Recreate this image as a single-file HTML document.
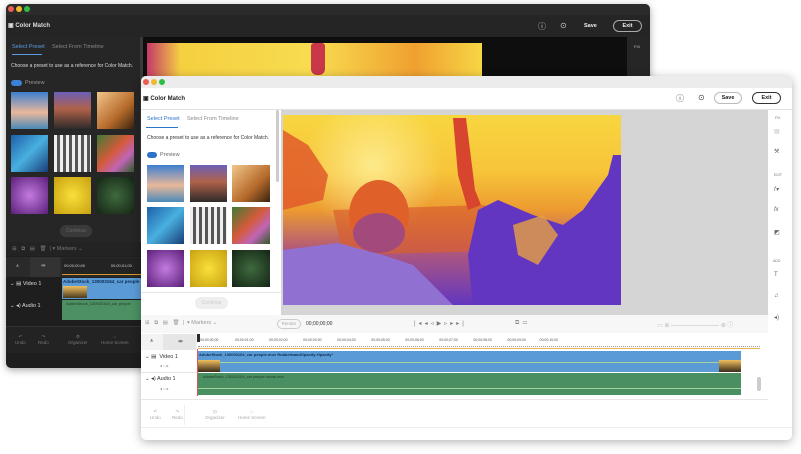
<!DOCTYPE html>
<html><head><meta charset="utf-8">
<style>
*{margin:0;padding:0;box-sizing:border-box}
body{width:801px;height:454px;background:#fff;position:relative;overflow:hidden;font-family:"Liberation Sans",sans-serif}
.a{position:absolute}
.t{position:absolute;white-space:nowrap;font-size:5.5px}
.dot{position:absolute;width:6px;height:6px;border-radius:50%}
</style></head><body>

<!-- DARK WINDOW -->
<div class="a" style="left:6px;top:4px;width:644px;height:364px;background:#1e1e1e;border-radius:5px;box-shadow:0 2px 8px rgba(0,0,0,.35)"></div>
<div class="a" style="left:6px;top:4px;width:644px;height:11px;background:#2b2b2b;border-radius:5px 5px 0 0"></div>
<div class="dot" style="left:8px;top:6px;background:#ee5b52"></div>
<div class="dot" style="left:16px;top:6px;background:#f0b92d"></div>
<div class="dot" style="left:24px;top:6px;background:#2bbd45"></div>
<div class="a" style="left:6px;top:15px;width:644px;height:22px;background:#252525"></div>
<div class="t" style="left:8px;top:22px;color:#ddd;font-weight:bold;font-size:6px">▣ Color Match</div>
<div class="t" style="left:538px;top:21px;color:#ccc;font-size:8px">ⓘ</div>
<div class="t" style="left:560px;top:21px;color:#ccc;font-size:8px">⊙</div>
<div class="t" style="left:584px;top:23px;color:#eee;font-weight:bold">Save</div>
<div class="a" style="left:613px;top:20px;width:29px;height:12px;border:1px solid #aaa;border-radius:6px;color:#eee;font-size:5.5px;font-weight:bold;text-align:center;line-height:10px">Exit</div>
<div class="a" style="left:6px;top:37px;width:137px;height:205px;background:#262626"></div>
<div class="a" style="left:140px;top:37px;width:3px;height:205px;background:#3a3a3a"></div>
<div class="t" style="left:12px;top:44px;color:#5c9ce6">Select Preset</div>
<div class="a" style="left:12px;top:54px;width:30px;height:1px;background:#5c9ce6"></div>
<div class="t" style="left:52px;top:44px;color:#888">Select From Timeline</div>
<div class="t" style="left:11px;top:63px;color:#ddd;font-size:5px">Choose a preset to use as a reference for Color Match.</div>
<div class="a" style="left:11px;top:80px;width:11px;height:6px;background:#3b82d6;border-radius:3px"></div>
<div class="t" style="left:25px;top:80px;color:#999">Preview</div>
<div class="a" style="left:11px;top:92px;width:37px;height:37px;background:linear-gradient(#3d7fd0,#e9b89a 55%,#4a8ab8)"></div>
<div class="a" style="left:54px;top:92px;width:37px;height:37px;background:linear-gradient(#6b5fb8,#b0624a 45%,#2e2a2a)"></div>
<div class="a" style="left:97px;top:92px;width:37px;height:37px;background:linear-gradient(135deg,#f2c68a,#b56a2a 60%,#3a2210)"></div>
<div class="a" style="left:11px;top:135px;width:37px;height:37px;background:linear-gradient(135deg,#1e5fa8,#49b0e0 50%,#173e78)"></div>
<div class="a" style="left:54px;top:135px;width:37px;height:37px;background:repeating-linear-gradient(90deg,#eee 0 3px,#555 3px 6px)"></div>
<div class="a" style="left:97px;top:135px;width:37px;height:37px;background:linear-gradient(135deg,#3f7a34,#d45a3a 45%,#c065b5 70%,#2f5c28)"></div>
<div class="a" style="left:11px;top:177px;width:37px;height:37px;background:radial-gradient(#c37ae0,#5a1e78)"></div>
<div class="a" style="left:54px;top:177px;width:37px;height:37px;background:radial-gradient(#f8e03a,#c9a010)"></div>
<div class="a" style="left:97px;top:177px;width:37px;height:37px;background:radial-gradient(#3e6a3e,#142414)"></div>
<div class="a" style="left:60px;top:225px;width:32px;height:12px;background:#3a3a3a;border-radius:6px;color:#666;font-size:5px;text-align:center;line-height:12px">Continue</div>
<div class="a" style="left:143px;top:37px;width:484px;height:205px;background:#0e0e0e"></div>
<div class="a" style="left:147px;top:43px;width:335px;height:40px;background:linear-gradient(90deg,#c53a6a,#f5d040 10%,#f8dc50 50%,#f0a030 80%,#f7d645)"></div>
<div class="a" style="left:311px;top:43px;width:14px;height:32px;background:#c83848;border-radius:3px 3px 6px 6px"></div>
<div class="a" style="left:627px;top:37px;width:23px;height:205px;background:#262626"></div>
<div class="t" style="left:634px;top:44px;color:#bbb;font-size:4px">FIX</div>
<div class="a" style="left:6px;top:242px;width:137px;height:14px;background:#232323"></div>
<div class="t" style="left:12px;top:246px;color:#777">⊞ &nbsp; ⧉ &nbsp; ▤ &nbsp; 🗑 &nbsp;| ▾ Markers ⌄</div>
<div class="a" style="left:6px;top:257px;width:137px;height:20px;background:#2a2a2a"></div>
<div class="a" style="left:30px;top:257px;width:30px;height:20px;background:#333"></div>
<div class="t" style="left:16px;top:263px;color:#aaa">⩚</div>
<div class="t" style="left:41px;top:263px;color:#aaa">⇹</div>
<div class="a" style="left:62px;top:258px;width:81px;height:16px;background:#232323"></div>
<div class="t" style="left:64px;top:263px;color:#ccc;font-size:4px">00;00;00;00 &nbsp; &nbsp; &nbsp; &nbsp; &nbsp; &nbsp; &nbsp; &nbsp; &nbsp; &nbsp; &nbsp; 00;00;01;00</div>
<div class="a" style="left:62px;top:274px;width:81px;height:1px;background:#d9962a"></div>
<div class="a" style="left:62px;top:278px;width:81px;height:21px;background:#5b9bd5"></div>
<div class="t" style="left:63px;top:279px;color:#0d2c55;font-size:4.5px;font-weight:bold">AdobeStock_130003164_car people</div>
<div class="a" style="left:63px;top:286px;width:24px;height:12px;background:linear-gradient(#f0c060,#4a3a20)"></div>
<div class="a" style="left:62px;top:300px;width:81px;height:20px;background:#4c9063"></div>
<div class="t" style="left:66px;top:301px;color:#1d3a26;font-size:4px">AdobeStock_130003164_car people</div>
<div class="t" style="left:10px;top:281px;color:#ddd;font-size:5.5px">⌄ ▤ Video 1</div>
<div class="t" style="left:10px;top:303px;color:#ddd;font-size:5.5px">⌄ ◂) Audio 1</div>
<div class="a" style="left:6px;top:326px;width:137px;height:27px;background:#232323;border-top:1px solid #333"></div>
<div class="t" style="left:15px;top:334px;color:#777;font-size:4.5px;text-align:center;line-height:6px">↶<br>Undo</div>
<div class="t" style="left:38px;top:334px;color:#777;font-size:4.5px;text-align:center;line-height:6px">↷<br>Redo</div>
<div class="t" style="left:68px;top:334px;color:#777;font-size:4.5px;text-align:center;line-height:6px">⚙<br>Organizer</div>
<div class="t" style="left:101px;top:334px;color:#777;font-size:4.5px;text-align:center;line-height:6px">⌂<br>Home Screen</div>

<!-- LIGHT WINDOW -->
<div class="a" style="left:141px;top:76px;width:651px;height:364px;background:#fff;border-radius:5px;box-shadow:0 2px 10px rgba(0,0,0,.3)"></div>
<div class="a" style="left:141px;top:76px;width:651px;height:12px;background:#ececec;border-radius:5px 5px 0 0"></div>
<div class="dot" style="left:143px;top:79px;background:#ee5b52"></div>
<div class="dot" style="left:151px;top:79px;background:#f0b92d"></div>
<div class="dot" style="left:159px;top:79px;background:#2bbd45"></div>
<div class="t" style="left:143px;top:95px;color:#222;font-weight:bold;font-size:6px">▣ Color Match</div>
<div class="t" style="left:676px;top:93px;color:#444;font-size:8px">ⓘ</div>
<div class="t" style="left:698px;top:93px;color:#444;font-size:8px">⊙</div>
<div class="a" style="left:714px;top:92px;width:28px;height:12px;border:1px solid #bbb;border-radius:6px;font-size:5.5px;font-weight:bold;text-align:center;line-height:10px;color:#222">Save</div>
<div class="a" style="left:752px;top:92px;width:29px;height:12px;border:1px solid #333;border-radius:6px;font-size:5.5px;font-weight:bold;text-align:center;line-height:10px;color:#222">Exit</div>
<div class="a" style="left:141px;top:109px;width:651px;height:1px;background:#e2e2e2"></div>
<div class="t" style="left:147px;top:116px;color:#2b72c9">Select Preset</div>
<div class="a" style="left:146px;top:127px;width:32px;height:1px;background:#2b72c9"></div>
<div class="t" style="left:187px;top:116px;color:#888">Select From Timeline</div>
<div class="t" style="left:147px;top:135px;color:#333;font-size:5px">Choose a preset to use as a reference for Color Match.</div>
<div class="a" style="left:147px;top:152px;width:10px;height:6px;background:#2b72c9;border-radius:3px"></div>
<div class="t" style="left:160px;top:152px;color:#666">Preview</div>
<div class="a" style="left:276px;top:110px;width:3px;height:72px;background:#ccc;border-radius:2px"></div>
<div class="a" style="left:147px;top:165px;width:37px;height:37px;background:linear-gradient(#3d7fd0,#e9b89a 55%,#4a8ab8)"></div>
<div class="a" style="left:190px;top:165px;width:37px;height:37px;background:linear-gradient(#6b5fb8,#b0624a 45%,#2e2a2a)"></div>
<div class="a" style="left:232px;top:165px;width:38px;height:37px;background:linear-gradient(135deg,#f2c68a,#b56a2a 60%,#3a2210)"></div>
<div class="a" style="left:147px;top:207px;width:37px;height:37px;background:linear-gradient(135deg,#1e5fa8,#49b0e0 50%,#173e78)"></div>
<div class="a" style="left:190px;top:207px;width:37px;height:37px;background:repeating-linear-gradient(90deg,#eee 0 3px,#555 3px 6px)"></div>
<div class="a" style="left:232px;top:207px;width:38px;height:37px;background:linear-gradient(135deg,#3f7a34,#d45a3a 45%,#c065b5 70%,#2f5c28)"></div>
<div class="a" style="left:147px;top:250px;width:37px;height:37px;background:radial-gradient(#c37ae0,#5a1e78)"></div>
<div class="a" style="left:190px;top:250px;width:37px;height:37px;background:radial-gradient(#f8e03a,#c9a010)"></div>
<div class="a" style="left:232px;top:250px;width:38px;height:37px;background:radial-gradient(#3e6a3e,#142414)"></div>
<div class="a" style="left:141px;top:292px;width:140px;height:1px;background:#e6e6e6"></div>
<div class="a" style="left:195px;top:297px;width:33px;height:12px;background:#eee;border-radius:6px;color:#ccc;font-size:5px;text-align:center;line-height:12px">Continue</div>
<div class="a" style="left:281px;top:110px;width:487px;height:205px;background:#d5d5d5"></div>
<svg class="a" style="left:283px;top:115px" width="338" height="190" viewBox="0 0 338 190">
<defs>
<linearGradient id="g" x1="0" y1="0" x2="0" y2="1"><stop offset="0" stop-color="#f8d640"/><stop offset=".3" stop-color="#f7c43a"/><stop offset=".5" stop-color="#ec9a30"/><stop offset=".7" stop-color="#b45a78"/><stop offset="1" stop-color="#6236c0"/></linearGradient>
<radialGradient id="s" cx="90" cy="50" r="70" gradientUnits="userSpaceOnUse"><stop offset="0" stop-color="#fff3a0" stop-opacity=".8"/><stop offset="1" stop-color="#fff3a0" stop-opacity="0"/></radialGradient>
</defs>
<rect width="338" height="190" fill="url(#g)"/>
<rect width="338" height="190" fill="url(#s)"/>
<path d="M0 15 L25 30 L45 60 L40 85 L0 95Z" fill="#e05a2a" opacity=".85"/>
<path d="M50 95 L200 90 L250 105 L240 135 L60 140Z" fill="#d8602e" opacity=".7"/>
<path d="M0 135 L55 128 L100 140 L130 150 L170 190 L0 190Z" fill="#9070d0"/>
<ellipse cx="96" cy="100" rx="30" ry="35" fill="#e0602a"/>
<ellipse cx="96" cy="118" rx="26" ry="20" fill="#a24a7c"/>
<path d="M170 3 L183 3 L192 75 L198 90 L185 95 L175 60Z" fill="#d8452e"/>
<path d="M195 95 L215 85 L250 100 L280 110 L300 95 L325 60 L330 40 L338 40 L338 190 L190 190 L185 140Z" fill="#6236c0"/>
<path d="M230 110 L260 100 L275 120 L255 150 L235 140Z" fill="#e8a040" opacity=".8"/>
</svg>
<div class="a" style="left:768px;top:110px;width:24px;height:210px;background:#fff"></div>
<div class="t" style="left:775px;top:116px;color:#777;font-size:3.5px">FIX</div>
<div class="t" style="left:774px;top:128px;color:#bbb;font-size:6px">▤</div>
<div class="t" style="left:774px;top:148px;color:#666;font-size:6px">⚒</div>
<div class="t" style="left:774px;top:173px;color:#777;font-size:3.5px">EDIT</div>
<div class="t" style="left:774px;top:186px;color:#666;font-size:6px;font-style:italic">f▾</div>
<div class="t" style="left:774px;top:207px;color:#666;font-size:6px;font-style:italic">fx</div>
<div class="t" style="left:774px;top:229px;color:#666;font-size:6px">◩</div>
<div class="t" style="left:773px;top:259px;color:#777;font-size:3.5px">ADD</div>
<div class="t" style="left:774px;top:272px;color:#666;font-size:6px">T</div>
<div class="t" style="left:774px;top:293px;color:#666;font-size:6px">♫</div>
<div class="t" style="left:774px;top:314px;color:#666;font-size:6px">◂)</div>
<div class="a" style="left:141px;top:315px;width:627px;height:18px;background:#f7f7f7"></div>
<div class="t" style="left:145px;top:320px;color:#999">⊞ &nbsp; ⧉ &nbsp; ▤ &nbsp; 🗑 &nbsp;| &nbsp;▾ Markers ⌄</div>
<div class="a" style="left:277px;top:319px;width:24px;height:10px;border:1px solid #ccc;border-radius:5px;color:#aaa;font-size:4.5px;text-align:center;line-height:8px">Render</div>
<div class="t" style="left:306px;top:321px;color:#333;font-size:5px">00;00;00;00</div>
<div class="t" style="left:414px;top:320px;color:#777;font-size:6px;letter-spacing:3px">|◂◂◃▶▹▸▸|</div>
<div class="t" style="left:515px;top:320px;color:#888;font-size:6px">⧉ &nbsp;▭</div>
<div class="t" style="left:657px;top:320px;color:#bbb;font-size:6px">▭ ⊕ ———————— ⊕ ⓘ</div>
<div class="a" style="left:141px;top:334px;width:56px;height:16px;background:#f3f3f3"></div>
<div class="a" style="left:163px;top:334px;width:33px;height:16px;background:#e6e6e6"></div>
<div class="t" style="left:150px;top:338px;color:#555;font-size:6px">⩚</div>
<div class="t" style="left:178px;top:338px;color:#555;font-size:6px">⇹</div>
<div class="a" style="left:197px;top:334px;width:3px;height:8px;background:#2b2b2b"></div>
<div class="t" style="left:200px;top:338px;color:#555;font-size:3.5px">00;00;00;00 &nbsp; &nbsp; &nbsp; &nbsp; &nbsp; &nbsp; &nbsp; &nbsp; 00;00;01;00 &nbsp; &nbsp; &nbsp; &nbsp; &nbsp; &nbsp; &nbsp; &nbsp;00;00;02;00 &nbsp; &nbsp; &nbsp; &nbsp; &nbsp; &nbsp; &nbsp; &nbsp;00;00;03;00 &nbsp; &nbsp; &nbsp; &nbsp; &nbsp; &nbsp; &nbsp; &nbsp;00;00;04;00 &nbsp; &nbsp; &nbsp; &nbsp; &nbsp; &nbsp; &nbsp; &nbsp;00;00;05;00 &nbsp; &nbsp; &nbsp; &nbsp; &nbsp; &nbsp; &nbsp; &nbsp;00;00;06;00 &nbsp; &nbsp; &nbsp; &nbsp; &nbsp; &nbsp; &nbsp; &nbsp;00;00;07;00 &nbsp; &nbsp; &nbsp; &nbsp; &nbsp; &nbsp; &nbsp; &nbsp;00;00;08;00 &nbsp; &nbsp; &nbsp; &nbsp; &nbsp; &nbsp; &nbsp; &nbsp;00;00;09;00 &nbsp; &nbsp; &nbsp; &nbsp; &nbsp; &nbsp; &nbsp;00;00;10;00</div>
<div class="a" style="left:198px;top:344px;width:562px;height:3px;border-bottom:1px dotted #999"></div>
<div class="a" style="left:198px;top:348px;width:562px;height:1px;background:#e8b55a"></div>
<div class="a" style="left:198px;top:351px;width:543px;height:21px;background:#5b9bd5"></div>
<div class="a" style="left:198px;top:362px;width:543px;height:1px;background:#a6d39a"></div>
<div class="t" style="left:199px;top:352px;color:#0d2c55;font-size:4px;font-weight:bold">AdobeStock_130003164_car people.mov RubberbandOpacity:Opacity*</div>
<div class="a" style="left:198px;top:360px;width:22px;height:12px;background:linear-gradient(#f0c060,#3a2a18)"></div>
<div class="a" style="left:719px;top:360px;width:22px;height:12px;background:linear-gradient(#f0c060,#3a2a18)"></div>
<div class="a" style="left:198px;top:373px;width:543px;height:22px;background:#4a8f62"></div>
<div class="a" style="left:198px;top:388px;width:543px;height:1px;background:#a6d39a"></div>
<div class="t" style="left:203px;top:375px;color:#1d3a26;font-size:3.8px">AdobeStock_130003164_car people neural.mov</div>
<div class="a" style="left:197px;top:349px;width:1px;height:47px;background:#d55"></div>
<div class="t" style="left:145px;top:354px;color:#333;font-size:5.5px">⌄ ▤ &nbsp;Video 1</div>
<div class="t" style="left:160px;top:363px;color:#888;font-size:4px">◂ ○ ▸</div>
<div class="t" style="left:145px;top:376px;color:#333;font-size:5.5px">⌄ ◂) Audio 1</div>
<div class="t" style="left:160px;top:386px;color:#888;font-size:4px">◂ ○ ▸</div>
<div class="a" style="left:141px;top:372px;width:56px;height:1px;background:#e6e6e6"></div>
<div class="a" style="left:757px;top:377px;width:4px;height:14px;background:#ccc;border-radius:2px"></div>
<div class="a" style="left:141px;top:399px;width:627px;height:1px;background:#e6e6e6"></div>
<div class="a" style="left:141px;top:427px;width:651px;height:1px;background:#eee"></div>
<div class="t" style="left:150px;top:409px;color:#aaa;font-size:4.5px;text-align:center;line-height:6px">↶<br>Undo</div>
<div class="t" style="left:172px;top:409px;color:#aaa;font-size:4.5px;text-align:center;line-height:6px">↷<br>Redo</div>
<div class="a" style="left:184px;top:405px;width:1px;height:20px;background:#eee"></div>
<div class="t" style="left:205px;top:409px;color:#aaa;font-size:4.5px;text-align:center;line-height:6px">⊡<br>Organizer</div>
<div class="t" style="left:238px;top:409px;color:#aaa;font-size:4.5px;text-align:center;line-height:6px">⌂<br>Home Screen</div>
</body></html>
